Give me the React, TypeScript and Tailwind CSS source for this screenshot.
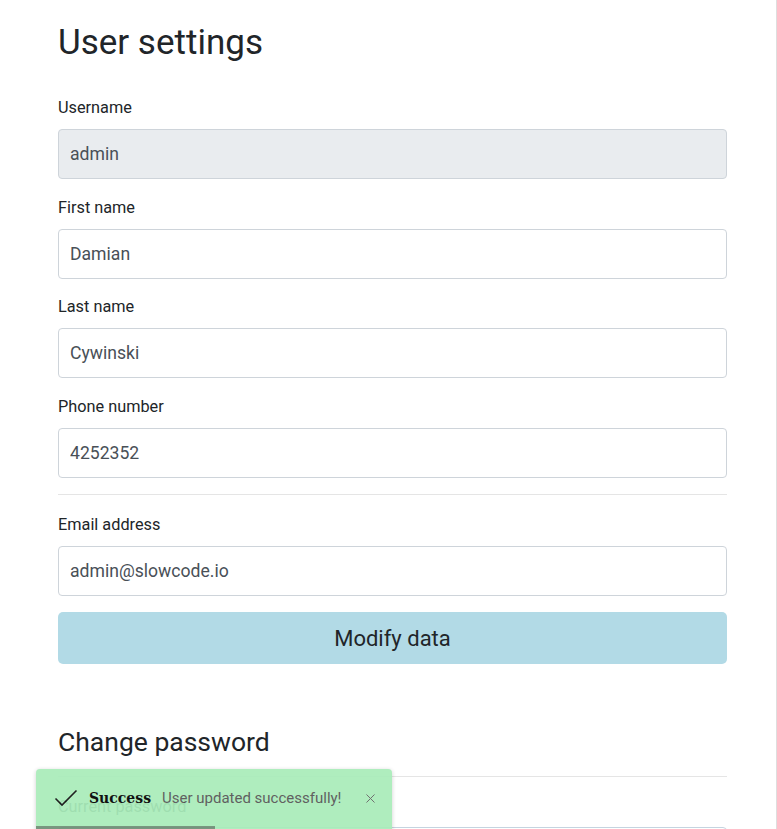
import { X } from 'lucide-react'

const fields = [
  { label: 'Username', value: 'admin', disabled: true },
  { label: 'First name', value: 'Damian' },
  { label: 'Last name', value: 'Cywinski' },
  { label: 'Phone number', value: '4252352' },
]

function Field({ label, value, disabled }: { label: string; value: string; disabled?: boolean }) {
  return (
    <div className="mb-[16.67px]">
      <label className="mb-[9px] block text-[16.3px] leading-6 text-[#212529]">{label}</label>
      <input
        readOnly
        value={value}
        className={`block h-[50px] w-full rounded-[4px] border border-[#ced4da] px-[11px] text-[17.6px] text-[#495057] outline-none ${
          disabled ? 'bg-[#e9ecef]' : 'bg-white'
        }`}
      />
    </div>
  )
}

export default function App() {
  return (
    <div
      className="relative h-[829px] w-[777px] overflow-hidden border-r border-[#dedede] bg-white"
      style={{ fontFamily: 'Roboto, "Liberation Sans", sans-serif' }}
    >
      <div className="mx-[58px] w-[669px] pt-[22px]">
        <h2 className="mb-[32px] text-[35px] leading-[42px] text-[#212529]">User settings</h2>

        {fields.map((f) => (
          <Field key={f.label} {...f} />
        ))}

        <hr className="mb-[18px] mt-[-1px] border-t border-[#e5e5e5]" />

        <Field label="Email address" value="admin@slowcode.io" />

        <button className="mt-[0.5px] block h-[51.5px] w-full rounded-[5px] bg-[#b2dae6] text-[22px] text-[#212529]">
          Modify data
        </button>

        {/* Change password */}
        <h3 className="mt-[63.5px] mb-[19px] text-[26.5px] leading-[30px] text-[#212529]">Change password</h3>
        <hr className="border-t border-[#e5e5e5]" />
        <div className="pt-[18px]">
          <label className="mb-[8px] block text-[16.3px] leading-6 text-[#212529]">Current password</label>
          <div className="h-[50px] w-full rounded-[4px] border border-[#c5d4e0] bg-white" />
        </div>
      </div>

      {/* Toast */}
      <div className="absolute left-[36px] top-[769px] h-[64px] w-[356px] overflow-hidden rounded-[4px] bg-[#a9ecba] opacity-[0.93] shadow-[0_1px_4px_rgba(0,0,0,0.2)]">
        <div className="flex h-[58px] items-center pl-[18px] pr-[14px]">
          <svg width="24" height="18" viewBox="0 0 24 18" className="mr-[11px] shrink-0">
            <path d="M1.5 9.5 L8 16 L22.5 1.5" fill="none" stroke="#111" strokeWidth="1.6" />
          </svg>
          <span
            className="mr-[11px] text-[14px] font-bold text-black"
            style={{ fontFamily: '"DejaVu Serif", serif' }}
          >
            Success
          </span>
          <span className="text-[15px] text-[#555]">User updated successfully!</span>
          <X className="ml-auto h-[15px] w-[15px] text-[#666]" strokeWidth={1.6} />
        </div>
        <div className="absolute bottom-[4px] left-0 h-[3px] w-[179px] bg-[#6f8f76]" />
      </div>
    </div>
  )
}
